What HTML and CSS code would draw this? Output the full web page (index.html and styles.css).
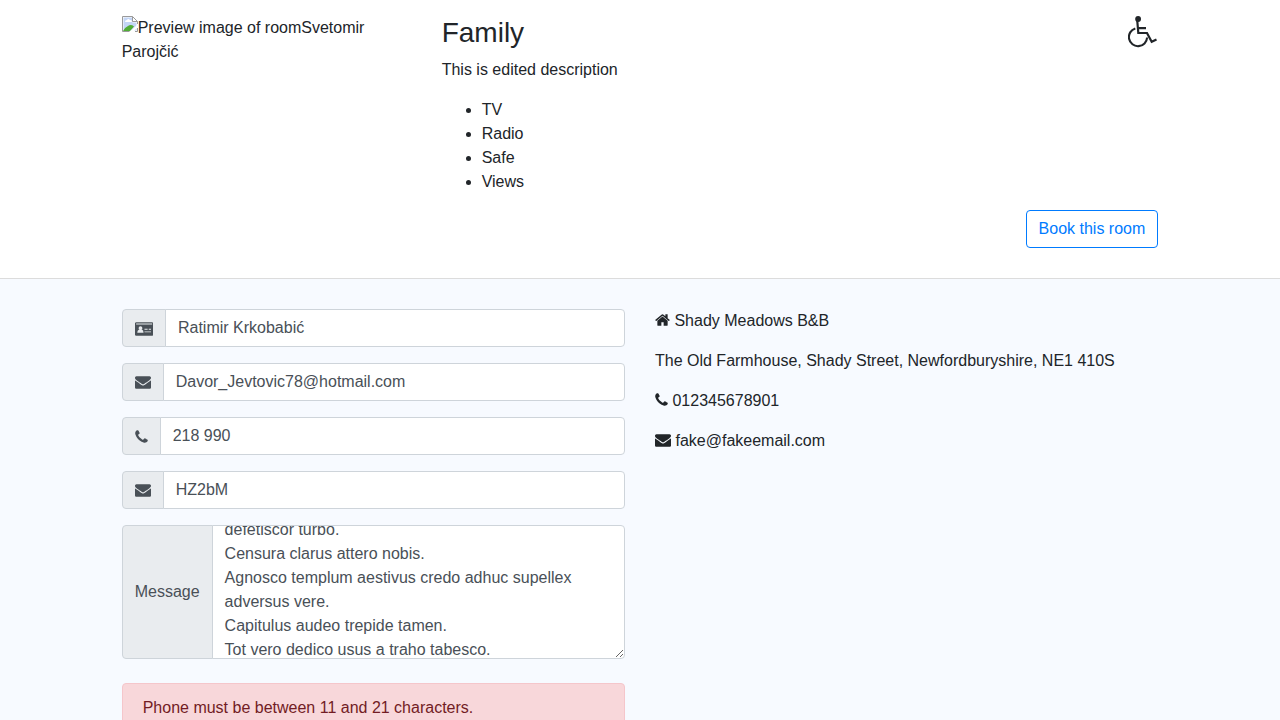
FILE: index.html
```html
<!DOCTYPE html>
<html lang="en">
<head>
<meta charset="utf-8">
<title>Shady Meadows B&amp;B</title>
<link rel="stylesheet" href="styles.css">
</head>
<body>
<svg class="sprite" aria-hidden="true">
  <symbol id="home" viewBox="64 0 1664 1792"><path d="M1472 992v480q0 26-19 45t-45 19h-384v-384h-256v384h-384q-26 0-45-19t-19-45v-480q0-1 .5-3t.5-3l575-474 575 474q1 2 1 6zm223-69l-62 74q-8 9-21 11h-3q-13 0-21-7l-692-577-692 577q-12 8-24 7-13-2-21-11l-62-74q-8-10-7-23.5t11-21.5l719-599q32-26 76-26t76 26l244 204v-195q0-14 9-23t23-9h192q14 0 23 9t9 23v408l219 182q10 8 11 21.5t-7 23.5z"/></symbol>
  <symbol id="envelope" viewBox="0 0 1792 1792"><path d="M1792 710v794q0 66-47 113t-113 47h-1472q-66 0-113-47t-47-113v-794q44 49 101 87 362 246 497 345 57 42 92.5 65.5t94.5 48 110 24.5h2q51 0 110-24.5t94.5-48 92.5-65.5q170-123 498-345 57-39 100-87zm0-294q0 79-49 151t-122 123q-376 261-468 325-10 7-42.5 31t-54 38.5-52 32.5-57.5 27-50 9h-2q-23 0-50-9t-57.5-27-52-32.5-54-38.5-42.5-31q-91-64-262-182.5t-205-142.5q-62-42-117-115.5t-55-136.5q0-78 41.5-130t118.5-52h1472q65 0 112.5 47t47.5 113z"/></symbol>
  <symbol id="phone" viewBox="192 0 1408 1792"><path d="M1600 1240q0 27-10 70.5t-21 68.5q-21 50-122 106-94 51-186 51-27 0-53-3.5t-57.5-12.5-47-14.5-55.5-20.5-49-18q-98-35-175-83-127-79-264-216t-216-264q-48-77-83-175-3-9-18-49t-20.5-55.5-14.5-47-12.5-57.5-3.5-53q0-92 51-186 56-101 106-122 25-11 68.5-21t70.5-10q14 0 21 3 18 6 53 76 11 19 30 54t35 63.5 31 53.5q3 4 17.5 25t21.5 35.5 7 28.5q0 20-28.5 50t-62 55-62 53-28.5 46q0 9 5 22.5t8.5 20.5 14 24 11.5 19q76 137 174 235t235 174q2 1 19 11.5t24 14 20.5 8.5 22.5 5q18 0 46-28.5t53-62 55-62 50-28.5q14 0 28.5 7t35.5 21.5 25 17.5q25 15 53.5 31t63.5 35 54 30q70 35 76 53 3 7 3 21z"/></symbol>
  <symbol id="idcard" viewBox="0 0 2048 1792"><path fill-rule="evenodd" d="M160 128h1728q66 0 113 47t47 113v1216q0 66-47 113t-113 47H160q-66 0-113-47T0 1504V288q0-66 47-113t113-47zM128 270v114h1792V270zM256 1310h700q0-260-150-330-50 20-80 20 100-60 100-210 0-190-210-190t-210 190q0 150 100 210-30 0-80-20-170 70-170 330zM1060 1180v90h730v-90zM1060 860v110h350v-110zM1540 860v110h250v-110z"/></symbol>
</svg>

<section class="room">
  <div class="container row">
    <div class="room-photo"><svg class="broken" viewBox="0 0 16 16" role="img" aria-label="Preview image of room"><path fill="#fff" d="M.5.5h10l5 5v10H.5z"/><path fill="#c3d5f5" d="M1.500 1.500h9v5h4v8h-13z"/><path fill="#fff" d="M3 6q0-2 2-2 1-2 3 0 2 0 2 2z"/><path fill="#51ad36" d="M1 15q1-3 5-5Q9 8 12 10.500L8 15z"/><path fill="#fff" d="M7.500 16l8.500-8v3l-5 5z"/><path fill="none" stroke="#9a9a9a" d="M.5 15.500V.5h10l5 5V8M10.500.5v5h5M.5 15.500h7M13 15.500h2.500V12"/></svg>Preview image of roomSvetomir Parojčić</div>
    <div class="room-info">
      <h3>Family</h3>
      <p>This is edited description</p>
      <ul><li>TV</li><li>Radio</li><li>Safe</li><li>Views</li></ul>
    </div>
    <div class="room-access"><svg class="wheelchair" viewBox="0 0 30 32"><circle cx="10.100" cy="3" r="2.900"/><path fill="none" stroke="currentColor" stroke-width="2.200" d="M9.200 4l1.100 13h8.700l4.700 8.700 4.800-2.300M9.600 12.100h8.400"/><path fill="none" stroke="currentColor" stroke-width="2.100" d="M7.300 12.400A9.100 9.100 0 1 0 19.100 21.500"/></svg></div>
  </div>
  <div class="container book"><button type="button">Book this room</button></div>
</section>

<section class="contact">
  <div class="container row">
    <form class="col">
      <div class="group"><span class="label"><svg class="icon idcard"><use href="#idcard"/></svg></span><input type="text" value="Ratimir Krkobabić"></div>
      <div class="group"><span class="label"><svg class="icon envelope"><use href="#envelope"/></svg></span><input type="text" value="Davor_Jevtovic78@hotmail.com"></div>
      <div class="group"><span class="label"><svg class="icon phone"><use href="#phone"/></svg></span><input type="text" value="218 990"></div>
      <div class="group"><span class="label"><svg class="icon envelope"><use href="#envelope"/></svg></span><input type="text" value="HZ2bM"></div>
      <div class="group message"><span class="label">Message</span><div class="textarea"><div class="scrolled">defetiscor turbo.<br>Censura clarus attero nobis.<br>Agnosco templum aestivus credo adhuc supellex adversus vere.<br>Capitulus audeo trepide tamen.<br>Tot vero dedico usus a traho tabesco.</div></div></div>
      <div class="alert"><p>Phone must be between 11 and 21 characters.</p></div>
    </form>
    <div class="col">
      <p><svg class="icon home"><use href="#home"/></svg> Shady Meadows B&amp;B</p>
      <p>The Old Farmhouse, Shady Street, Newfordburyshire, NE1 410S</p>
      <p><svg class="icon phone"><use href="#phone"/></svg> 012345678901</p>
      <p><svg class="icon envelope"><use href="#envelope"/></svg> fake@fakeemail.com</p>
    </div>
  </div>
</section>
</body>
</html>
```
FILE: styles.css
```css
* { box-sizing: border-box; }
html, body { height: 100%; }
body {
  margin: 0;
  overflow: hidden;
  display: flex;
  flex-direction: column;
  font: 16px/24px "Liberation Sans", Arial, sans-serif;
  color: #212529;
  background: #fff;
}
p, ul { margin: 0 0 16px; }
ul { padding-left: 40px; }
h3 { margin: 0 0 8px; font-size: 28px; font-weight: 500; line-height: 33.6px; }
.sprite { display: none; }
.container { width: 1036.66px; margin: 0 auto; }
.row { display: flex; }

.room { flex: none; height: 279px; padding-top: 16px; border-bottom: 1px solid #dcdcdc; }
.room-photo { width: 290px; margin-right: 30px; }
.room-info { flex: 1; }
.broken { width: 16px; height: 16px; vertical-align: 1px; margin-top: -1px; }
.wheelchair { display: block; width: 30px; height: 32px; fill: currentColor; }
.room-access { padding-right: 0.4px; }
.book { display: flex; justify-content: flex-end; }
.book button {
  height: 38px;
  padding: 6px 12px;
  font: inherit;
  color: #007bff;
  background: transparent;
  border: 1px solid #007bff;
  border-radius: 4px;
}

.contact { flex: 1; min-height: 0; padding-top: 30px; background: #f7faff; }
.contact .row { gap: 30px; }
.col { flex: 1; min-width: 0; }
.group { display: flex; height: 38px; margin-bottom: 16px; }
.label {
  display: flex;
  align-items: center;
  padding: 0 12px;
  color: #495057;
  background: #e9ecef;
  border: 1px solid #ced4da;
  border-radius: 4px 0 0 4px;
}
.group input, .textarea {
  flex: 1;
  min-width: 0;
  margin: 0 0 0 -1px;
  padding: 6px 12px;
  font: inherit;
  color: #495057;
  background: #fff;
  border: 1px solid #ced4da;
  border-radius: 0 4px 4px 0;
}
.group.message { height: 134px; margin-bottom: 24px; }
.textarea { padding-top: 0; overflow: hidden; resize: vertical; }
.scrolled { margin-top: -8px; }
.alert {
  padding: 12px 20px;
  color: #721c24;
  background: #f8d7da;
  border: 1px solid #f5c6cb;
  border-radius: 4px;
}
.icon { height: 16px; fill: currentColor; vertical-align: -2.29px; }
.icon.home { width: 15px; }
.icon.phone { width: 13px; }
.icon.envelope { width: 16px; }
.icon.idcard { width: 18.29px; }
.label .phone, .label .idcard { margin-top: 1px; }
```
